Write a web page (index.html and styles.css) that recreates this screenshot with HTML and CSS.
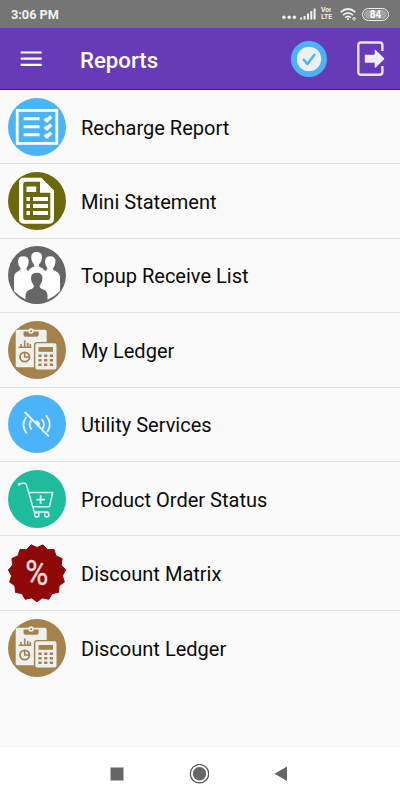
FILE: index.html
```
<!DOCTYPE html>
<html lang="en">
<head>
    <meta charset="UTF-8">
    <meta name="viewport" content="width=device-width, initial-scale=1.0">
    <title>Reports</title>
    <link rel="stylesheet" href="styles.css">
</head>

<body>
    <!-- Icons used more than once -->
    <svg class="defs">
        <symbol id="ledger" viewBox="0 0 58 58">
            <circle cx="29" cy="29" r="29" fill="#a5824b"/>
            <rect x="7.7" y="8.8" width="31" height="37.4" rx="2" fill="#ecf0f1"/>
            <path d="M15.5 10.5h4.7a3 3 0 0 1 5.6 0h4.9v3.2q0 2-2 2H17.5q-2 0-2-2z" fill="#a5824b"/>
            <circle cx="23" cy="10" r="2.7" fill="#ecf0f1"/>
            <circle cx="23" cy="10.3" r="1" fill="#a5824b"/>
            <path d="M10.7 26.3h12.6M13 26v-3M16.7 26v-6.5M19.7 26v-4.3M22.3 26v-3" stroke="#a5824b" stroke-width="1.6" fill="none"/>
            <circle cx="16.7" cy="36" r="4.7" fill="none" stroke="#a5824b" stroke-width="1.8"/>
            <path d="M16.7 31v5h5" fill="none" stroke="#a5824b" stroke-width="1.6"/>
            <rect x="26.6" y="21.6" width="22.6" height="27.6" rx="2.6" fill="#ecf0f1" stroke="#a5824b" stroke-width="1.4"/>
            <rect x="30.6" y="26" width="14.4" height="4.8" fill="#a5824b"/>
            <path d="M30.4 34.7h15M30.4 39.2h15M30.4 43.8h15" fill="none" stroke="#a5824b" stroke-width="2.6" stroke-dasharray="3.2 2.5"/>
        </symbol>
    </svg>

    <div class="statusbar">
        <span class="time">3:06 PM</span>
        <div class="signals">
            <svg width="15" height="12" viewBox="0 0 15 12" fill="#f2f2f2">
                <circle cx="2" cy="9.3" r="1.7"/>
                <circle cx="7.2" cy="9.3" r="1.7"/>
                <circle cx="12.4" cy="9.3" r="1.7"/>
            </svg>
            <svg class="bars" width="16" height="12" viewBox="0 0 16 12" fill="none" stroke="#f2f2f2" stroke-width="2">
                <path d="M1.2 11.5v-2M4.6 11.5V8M8 11.5V5.5M11.3 11.5V3M14.6 11.5V0.5"/>
            </svg>
            <div class="volte">
                <span>Voı</span>
                <span>LTE</span>
            </div>
            <svg class="wifi" width="17" height="13" viewBox="0 0 17 13" fill="none" stroke="#f2f2f2" stroke-width="1.7">
                <path d="M0.7 4.2Q8 -2.2 15.3 4.2M3 7.1Q8 2.6 13 7.1M5.2 9.7Q8 7.2 10.8 9.7"/>
                <circle cx="8" cy="11" r="1" fill="#f2f2f2" stroke="none"/>
                <path d="M12.8 10.8h2.8a1.4 1.4 0 1 0-.5 1.2" stroke-width=".8"/>
            </svg>
            <span class="battery"><b>84</b></span>
        </div>
    </div>

    <header class="toolbar">
        <svg class="menu" width="22" height="16" viewBox="0 0 22 16" stroke="#fff" stroke-width="2.2">
            <path d="M0.7 1.5h21M0.7 7.7h21M0.7 13.9h21"/>
        </svg>
        <h1>Reports</h1>
        <svg class="check" width="36" height="36" viewBox="0 0 36 36">
            <circle cx="18" cy="18" r="18" fill="#4bb3f7"/>
            <circle cx="18" cy="18" r="12.2" fill="#ecf0f1"/>
            <path d="M12.8 18.8l3.6 4.2 7-9.3" fill="none" stroke="#4bb3f7" stroke-width="2.5" stroke-linecap="round" stroke-linejoin="round"/>
        </svg>
        <svg class="logout" width="28" height="36" viewBox="0 0 28 36">
            <path d="M25.4 10V4.2Q25.4 1.5 22.7 1.5H4.2Q1.3 1.5 1.3 4.4V31Q1.3 33.8 4.2 33.8H22.7Q25.4 33.8 25.4 31V25" fill="none" stroke="#e9e4f4" stroke-width="2.4"/>
            <path d="M8.5 13.8h9.2V9.5q0-1.2 1-.5l8.2 8q.8.8 0 1.5l-8.2 8q-1 .7-1-.5v-4.2H8.5q-.7 0-.7-.7v-6.6q0-1 .7-1z" fill="#eceef1"/>
        </svg>
    </header>

    <ul class="list">
        <li>
            <svg class="icon" viewBox="0 0 58 58">
                <circle cx="29" cy="29" r="29" fill="#4bb3f7"/>
                <g fill="none" stroke="#fff">
                    <rect x="9.2" y="12.4" width="39.6" height="33" stroke-width="2.8"/>
                    <path d="M15.7 20.7h15.8M15.7 28.7h15.8M15.7 36.7h15.8" stroke-width="3"/>
                    <path d="M36.8 20.4l2.2 2.2 4.2-4M36.8 28.4l2.2 2.2 4.2-4M36.8 36.4l2.2 2.2 4.2-4" stroke-width="3.5"/>
                </g>
            </svg>
            <span>Recharge Report</span>
        </li>
        <li>
            <svg class="icon" viewBox="0 0 58 58">
                <circle cx="29" cy="29" r="29" fill="#6b680d"/>
                <path d="M16 5.8H33.3L46 18.5V46.5Q46 51.8 40.7 51.8H16.3Q11 51.8 11 46.5V11Q11 5.8 16 5.8z" fill="#fff"/>
                <path d="M17.5 9.8H32V20.7H42.3V45.5Q42.3 48 39.7 48H17.7Q15.2 48 15.2 45.5V12Q15.2 9.8 17.5 9.8z" fill="#6b680d"/>
                <path d="M18.5 14.4H28.2V20H18.5zM18.5 25H22V29H18.5zM25 25H40V29H25zM18.5 32H22V36H18.5zM25 32H40V36H25zM18.5 39H22V43H18.5zM25 39H40V43H25z" fill="#fff"/>
            </svg>
            <span>Mini Statement</span>
        </li>
        <li>
            <svg class="icon" viewBox="0 0 58 58">
                <circle cx="29" cy="29" r="29" fill="#666"/>
                <path d="M6 45V32Q6 27.5 9 26L12 24Q13 23.5 12.4 22Q10 19.5 10 15.5Q10 10.3 15.3 10.3Q20.7 10.3 20.7 15.5Q20.7 19.5 18.4 22Q18.2 24.2 20.5 25Q22.2 21.5 26 20.8Q26.5 18.8 25.4 17.5Q23.2 15 23.2 11.4Q23.2 6 28.6 6Q34 6 34 11.4Q34 15 31.7 17.5Q30.6 18.8 31.2 20.8Q35 21.5 37 25Q39.7 24.2 39.3 22Q37 19.5 37 15.5Q37 10.3 42.3 10.3Q47.5 10.3 47.5 15.5Q47.5 19.5 45.2 22Q44.6 23.5 45.6 24L49 26Q52 27.5 52 32V45Q46 51 40 53.5H18Q12 51 6 45z" fill="#fff"/>
                <path d="M17.5 55V50Q17.5 45 22 43.5Q25.5 42.5 26 40Q23 36.5 23 32.3Q23 26.8 28.7 26.8Q34.5 26.8 34.5 32.3Q34.5 36.5 31.5 40Q32 42.5 35.5 43.5Q39.5 45 39.5 50V55Q34 58 29 58Q24 58 17.5 55z" fill="#666"/>
            </svg>
            <span>Topup Receive List</span>
        </li>
        <li>
            <svg class="icon"><use href="#ledger"/></svg>
            <span>My Ledger</span>
        </li>
        <li>
            <svg class="icon" viewBox="0 0 58 58">
                <circle cx="29" cy="29" r="29" fill="#4bb3f7"/>
                <g fill="none" stroke="#ecf6fb" stroke-width="1.9" stroke-linecap="round">
                    <path d="M17.2 17.5L40.3 40.8"/>
                    <path d="M18 22.5Q12.5 30 18.3 37.8M22.7 26Q20.3 30 23.2 34M38.5 21Q44.5 29 39.5 36.5M34 24.5Q37.5 29 35 33"/>
                </g>
                <path d="M26 26.5Q29.5 24 31.8 28Q32.3 30 31 31.2z" fill="#ecf6fb"/>
            </svg>
            <span>Utility Services</span>
        </li>
        <li>
            <svg class="icon" viewBox="0 0 58 58">
                <circle cx="29" cy="29" r="29" fill="#1ebc9c"/>
                <g fill="none" stroke="#d9f5ee" stroke-width="1.5" stroke-linejoin="round">
                    <circle cx="11.2" cy="14.3" r=".7"/>
                    <path d="M12 13.8Q14 13 16.5 13.3Q18 13.5 18.6 15.5L26.3 42H40.5M21.5 22.5H44.7L41.5 36.7H25"/>
                    <circle cx="28.8" cy="44.8" r="2.2"/>
                    <circle cx="38.8" cy="44.8" r="2.2"/>
                    <path d="M32.6 25.3V34M28.3 29.6H37" stroke-width="1.8"/>
                </g>
            </svg>
            <span>Product Order Status</span>
        </li>
        <li>
            <svg class="icon" viewBox="0 0 58 58">
                <path d="M29 3.5L35 .8L39.4 5.7L46 5.5L48 11.9L54.1 14.5L53.3 21.1L57.6 26L54.4 31.7L56.4 38L51.1 41.8L50.5 48.4L44 49.6L40.8 55.3L34.3 53.9L29 57.8L23.7 53.9L17.2 55.3L14 49.6L7.5 48.4L6.9 41.8L1.6 38L3.6 31.7L.4 26L4.7 21.1L3.9 14.5L10 11.9L12 5.5L18.6 5.7L23 .8z" fill="#8f0808" stroke="#8f0808" stroke-linejoin="round"/>
                <text class="percent" transform="translate(28.7 41) scale(.9 1)" text-anchor="middle">%</text>
            </svg>
            <span>Discount Matrix</span>
        </li>
        <li>
            <svg class="icon"><use href="#ledger"/></svg>
            <span>Discount Ledger</span>
        </li>
    </ul>

    <nav class="navbar">
        <svg width="20" height="20" viewBox="0 0 20 20"><path d="M3.5 3.5h13v13h-13z" fill="#666"/></svg>
        <svg width="20" height="20" viewBox="0 0 20 20">
            <circle cx="10.5" cy="9.7" r="9.2" fill="none" stroke="#555" stroke-width="1.2"/>
            <circle cx="10.5" cy="9.7" r="6.7" fill="#666"/>
        </svg>
        <svg width="20" height="20" viewBox="0 0 20 20"><path d="M3.5 9.8L16 2.5v14.6z" fill="#666"/></svg>
    </nav>
</body>
</html>
```

FILE: styles.css
```
* {
    box-sizing: border-box;
}

body {
    margin: 0;
    width: 400px;
    height: 800px;
    display: flex;
    flex-direction: column;
    background: #fafafa;
    font-family: Roboto, "Liberation Sans", sans-serif;
    overflow: hidden;
}

.defs {
    display: none;
}

.statusbar {
    height: 28px;
    flex: none;
    display: flex;
    align-items: center;
    justify-content: space-between;
    padding: 0 11px;
    background: #757575;
    color: #f2f2f2;
}

.time {
    font-size: 12.7px;
    font-weight: 700;
}

.signals {
    display: flex;
    align-items: center;
}

.bars {
    margin: 0 5px 0 3px;
}

.volte {
    width: 13px;
    font-size: 6.8px;
    line-height: 7px;
    font-weight: 700;
}

.volte span {
    display: block;
}

.wifi {
    margin: 1px 5px 0 6px;
}

.battery {
    width: 27px;
    height: 13px;
    padding: 1px;
    border: 1px solid #f2f2f2;
    border-radius: 7px;
}

.battery b {
    display: block;
    height: 9px;
    border-radius: 5px;
    background: #a3a3a3;
    color: #fff;
    font-size: 10px;
    line-height: 9px;
    text-align: center;
}

.toolbar {
    height: 62px;
    flex: none;
    display: flex;
    align-items: center;
    padding: 0 15px 0 20px;
    background: #673ab7;
    border-bottom: 1px solid #4b0d9f;
}

.toolbar h1 {
    flex: 1;
    margin: 2px 0 0 38px;
    color: #fff;
    font-size: 22.2px;
    font-weight: 500;
}

.logout {
    margin-left: 30px;
}

.list {
    flex: 1;
    margin: 0;
    padding: 0;
    list-style: none;
}

.list li {
    height: 74.4px;
    display: flex;
    align-items: center;
    padding-left: 8px;
    border-bottom: 1px solid #dedede;
    color: #0a0a0a;
    font-size: 20.05px;
}

.list li span {
    padding-top: 2px;
}

.list li:last-child {
    border-bottom: 0;
}

.icon {
    width: 58px;
    height: 58px;
    margin-right: 15px;
}

.percent {
    font-size: 35px;
    fill: #f0dcdc;
    stroke: #f0dcdc;
    stroke-width: .4;
}

.navbar {
    height: 54px;
    flex: none;
    display: flex;
    align-items: center;
    justify-content: space-between;
    padding: 0 109px 0 107px;
    background: #fff;
    border-top: 1px solid #f1f1f1;
}
```
